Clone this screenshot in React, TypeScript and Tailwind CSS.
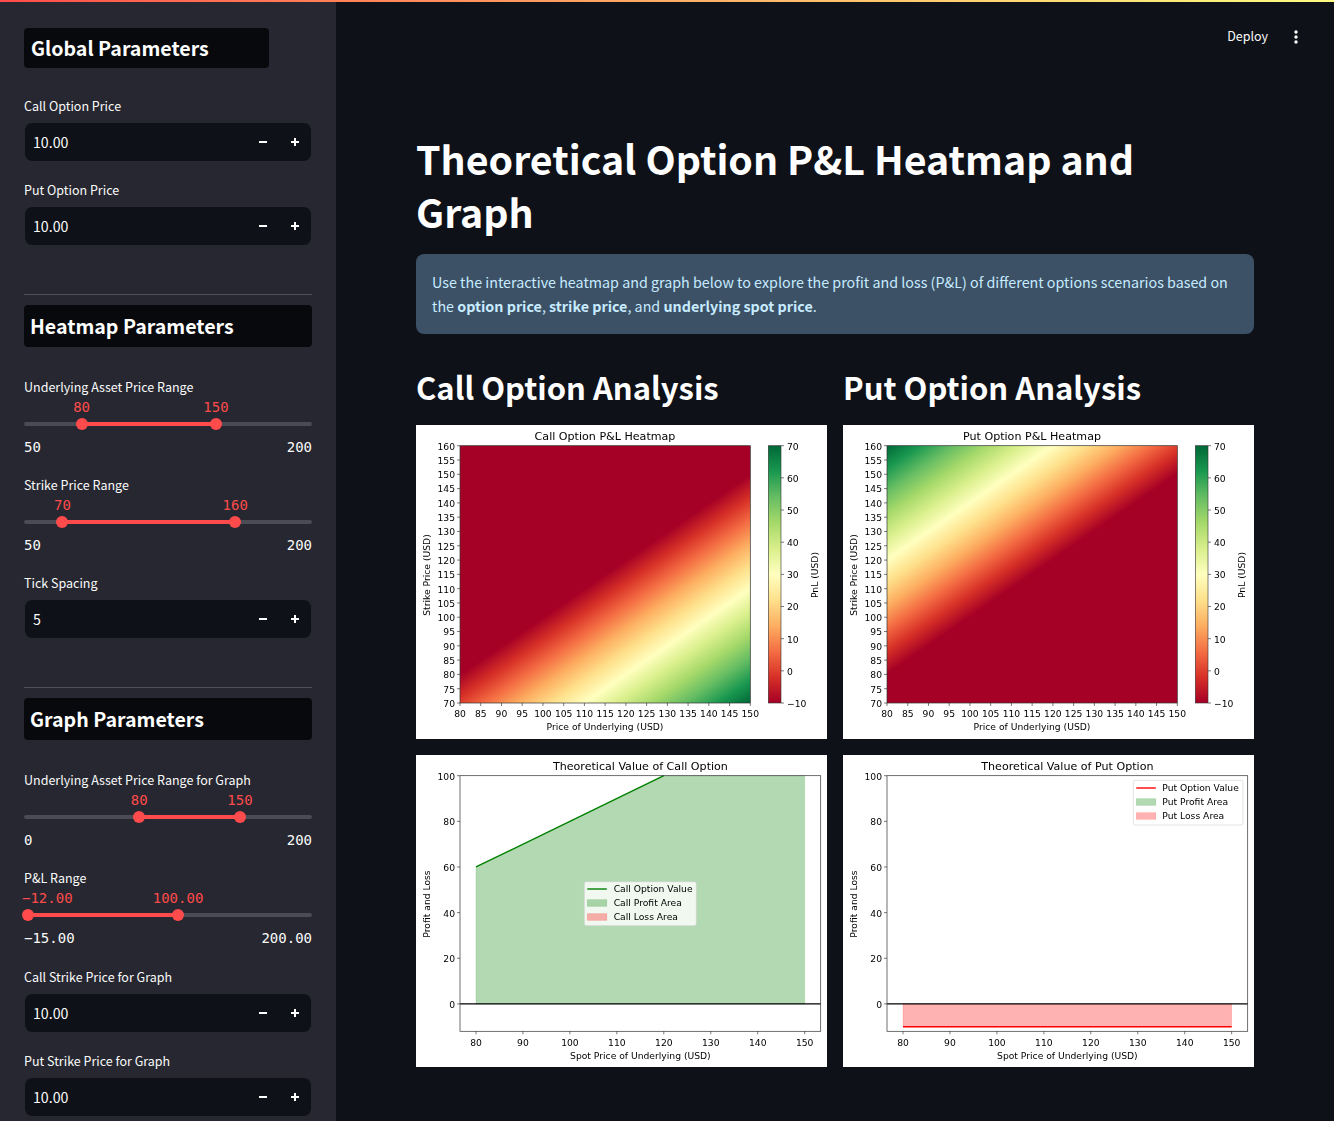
const RDYLGN = ['#a50026', '#d73027', '#f46d43', '#fdae61', '#fee08b', '#ffffbf', '#d9ef8b', '#a6d96a', '#66bd63', '#1a9850', '#006837']

const PLOT = { left: 44, right: 334.3, top: 20.7, bottom: 278 }
const LINE_PLOT = { left: 44, right: 404.7, top: 20.7, bottom: 276.3 }

function range(from: number, to: number, step: number) {
  const out: number[] = []
  for (let v = from; v <= to; v += step) out.push(v)
  return out
}

function ColorStops() {
  return (
    <>
      {RDYLGN.map((color, i) => (
        <stop key={color} offset={i / 10} stopColor={color} />
      ))}
    </>
  )
}

function Heatmap({ kind }: { kind: 'Call' | 'Put' }) {
  const sx = (s: number) => PLOT.left + ((s - 80) * (PLOT.right - PLOT.left)) / 70
  const ky = (k: number) => PLOT.bottom - ((k - 70) * (PLOT.bottom - PLOT.top)) / 90
  const cbarTop = PLOT.top
  const cbarBottom = PLOT.bottom
  const cbarY = (v: number) => cbarBottom - ((v + 10) * (cbarBottom - cbarTop)) / 80

  // pnl only depends on S - K, so the whole field is one linear gradient
  const sign = kind === 'Call' ? 1 : -1
  const gx = (sign * 70) / (PLOT.right - PLOT.left)
  const gy = (sign * 90) / (PLOT.bottom - PLOT.top)
  const norm = gx * gx + gy * gy
  const x1 = sx(100)
  const y1 = ky(100)
  const x2 = x1 + (gx * 80) / norm
  const y2 = y1 + (gy * 80) / norm

  return (
    <svg width="411" height="314" className="block bg-white font-['DejaVu_Sans'] blur-[0.45px]">
      <defs>
        <linearGradient id={`field-${kind}`} gradientUnits="userSpaceOnUse" x1={x1} y1={y1} x2={x2} y2={y2}>
          <ColorStops />
        </linearGradient>
        <linearGradient id={`cbar-${kind}`} x1="0" y1="1" x2="0" y2="0">
          <ColorStops />
        </linearGradient>
      </defs>
      <text x="189" y="15.2" fontSize="11.1" textAnchor="middle" fill="#000">
        {kind} Option P&amp;L Heatmap
      </text>
      <rect x={PLOT.left} y={PLOT.top} width={PLOT.right - PLOT.left} height={PLOT.bottom - PLOT.top} fill={`url(#field-${kind})`} stroke="#333" strokeWidth="0.7" />
      {range(80, 150, 5).map(s => (
        <g key={s}>
          <line x1={sx(s)} x2={sx(s)} y1={PLOT.bottom} y2={PLOT.bottom + 3} stroke="#222" strokeWidth="0.6" />
          <text x={sx(s)} y="292.2" fontSize="9.2" textAnchor="middle" fill="#000">{s}</text>
        </g>
      ))}
      {range(70, 160, 5).map(k => (
        <g key={k}>
          <line x1={PLOT.left - 3} x2={PLOT.left} y1={ky(k)} y2={ky(k)} stroke="#222" strokeWidth="0.6" />
          <text x={PLOT.left - 5} y={ky(k) + 3.9} fontSize="9.2" textAnchor="end" fill="#000">{k}</text>
        </g>
      ))}
      <text x="189" y="305" fontSize="9.2" textAnchor="middle" fill="#000">Price of Underlying (USD)</text>
      <text transform="translate(14 150) rotate(-90)" fontSize="9.2" textAnchor="middle" fill="#000">Strike Price (USD)</text>
      <rect x="352.3" y={cbarTop} width="12.7" height={cbarBottom - cbarTop} fill={`url(#cbar-${kind})`} stroke="#333" strokeWidth="0.6" />
      {range(-10, 70, 10).map(v => (
        <g key={v}>
          <line x1="365" x2="368" y1={cbarY(v)} y2={cbarY(v)} stroke="#222" strokeWidth="0.6" />
          <text x="371" y={cbarY(v) + 3.9} fontSize="9.2" fill="#000">{v < 0 ? `\u2212${-v}` : v}</text>
        </g>
      ))}
      <text transform="translate(402 150) rotate(-90)" fontSize="9.2" textAnchor="middle" fill="#000">PnL (USD)</text>
    </svg>
  )
}

function ValueChart({ kind }: { kind: 'Call' | 'Put' }) {
  const isCall = kind === 'Call'
  const sx = (s: number) => 60 + ((s - 80) * 328.67) / 70
  const py = (v: number) => LINE_PLOT.top + ((100 - v) * (LINE_PLOT.bottom - LINE_PLOT.top)) / 112
  const lg = isCall
    ? { x: 168.3, y: 126.7, w: 112, h: 44, rows: [134, 148, 162], hx: 171.3, tx: 197.7 }
    : { x: 290.3, y: 25.3, w: 109.7, h: 44.7, rows: [33, 47, 61], hx: 293.3, tx: 319.3 }

  return (
    <svg width="411" height="312" className="block bg-white font-['DejaVu_Sans'] blur-[0.45px]">
      <text x="224.4" y="15.2" fontSize="11.1" textAnchor="middle" fill="#000">
        Theoretical Value of {kind} Option
      </text>
      {isCall ? (
        <>
          <polygon
            points={`${sx(80)},${py(0)} ${sx(80)},${py(60)} ${sx(120)},${py(100)} ${sx(150)},${py(100)} ${sx(150)},${py(0)}`}
            fill="#008000"
            fillOpacity="0.3"
            stroke="#008000"
            strokeOpacity="0.2"
            strokeWidth="0.7"
          />
          <line x1={sx(80)} y1={py(60)} x2={sx(120)} y2={py(100)} stroke="#008000" strokeWidth="1.4" />
        </>
      ) : (
        <>
          <rect x={sx(80)} y={py(0)} width={sx(150) - sx(80)} height={py(-10) - py(0)} fill="#ff0000" fillOpacity="0.3" stroke="#ff0000" strokeOpacity="0.2" strokeWidth="0.7" />
          <line x1={sx(80)} y1={py(-10)} x2={sx(150)} y2={py(-10)} stroke="#ff0000" strokeWidth="1.6" />
        </>
      )}
      <line x1={LINE_PLOT.left} x2={LINE_PLOT.right} y1={py(0)} y2={py(0)} stroke="#000" strokeWidth="1.1" />
      <rect x={LINE_PLOT.left} y={LINE_PLOT.top} width={LINE_PLOT.right - LINE_PLOT.left} height={LINE_PLOT.bottom - LINE_PLOT.top} fill="none" stroke="#333" strokeWidth="0.7" />
      {range(80, 150, 10).map(s => (
        <g key={s}>
          <line x1={sx(s)} x2={sx(s)} y1={LINE_PLOT.bottom} y2={LINE_PLOT.bottom + 3} stroke="#222" strokeWidth="0.6" />
          <text x={sx(s)} y="290.5" fontSize="9.2" textAnchor="middle" fill="#000">{s}</text>
        </g>
      ))}
      {range(0, 100, 20).map(v => (
        <g key={v}>
          <line x1={LINE_PLOT.left - 3} x2={LINE_PLOT.left} y1={py(v)} y2={py(v)} stroke="#222" strokeWidth="0.6" />
          <text x={LINE_PLOT.left - 5} y={py(v) + 3.9} fontSize="9.2" textAnchor="end" fill="#000">{v}</text>
        </g>
      ))}
      <text x="224.4" y="303.5" fontSize="9.2" textAnchor="middle" fill="#000">Spot Price of Underlying (USD)</text>
      <text transform="translate(14 149) rotate(-90)" fontSize="9.2" textAnchor="middle" fill="#000">Profit and Loss</text>

      <rect x={lg.x} y={lg.y} width={lg.w} height={lg.h} rx="2" fill="#fff" fillOpacity="0.8" stroke="#ccc" strokeOpacity="0.8" strokeWidth="0.7" />
      <line x1={lg.hx} x2={lg.hx + 19.5} y1={lg.rows[0]} y2={lg.rows[0]} stroke={isCall ? '#008000' : '#ff0000'} strokeWidth="1.4" />
      <rect x={lg.hx} y={lg.rows[1] - 3.3} width="19.5" height="6.6" fill="#008000" fillOpacity="0.3" stroke="#008000" strokeOpacity="0.2" strokeWidth="0.7" />
      <rect x={lg.hx} y={lg.rows[2] - 3.3} width="19.5" height="6.6" fill="#ff0000" fillOpacity="0.3" stroke="#ff0000" strokeOpacity="0.2" strokeWidth="0.7" />
      <text x={lg.tx} y={lg.rows[0] + 3.3} fontSize="9.2" fill="#000">{kind} Option Value</text>
      <text x={lg.tx} y={lg.rows[1] + 3.3} fontSize="9.2" fill="#000">{kind} Profit Area</text>
      <text x={lg.tx} y={lg.rows[2] + 3.3} fontSize="9.2" fill="#000">{kind} Loss Area</text>
    </svg>
  )
}

function SectionHeading({ title, className }: { title: string; className: string }) {
  return (
    <div className={`flex items-center rounded bg-[#08090c] text-[19.6px] font-bold leading-none text-white ${className}`}>
      {title}
    </div>
  )
}

function NumberField({ label, value, className = '' }: { label: string; value: string; className?: string }) {
  return (
    <div className={className}>
      <div className="h-[21px] text-[12.5px] leading-[19px] text-[#fafafa]">{label}</div>
      <div className="mt-1.5 flex h-[38px] items-center rounded-lg border-x border-[#262730] bg-[#0e1117] pl-2 text-[14.2px] text-[#fafafa]">
        <span className="flex-1 pt-0.5">{value}</span>
        <svg width="8" height="8" viewBox="0 0 8 8" className="mr-6 text-white">
          <rect x="0" y="3" width="8" height="2" fill="currentColor" />
        </svg>
        <svg width="8" height="8" viewBox="0 0 8 8" className="mr-3 text-white">
          <rect x="0" y="3" width="8" height="2" fill="currentColor" />
          <rect x="3" y="0" width="2" height="8" fill="currentColor" />
        </svg>
      </div>
    </div>
  )
}

type SliderProps = {
  label: string
  min: number
  max: number
  low: number
  high: number
  digits?: number
}

function RangeSlider({ label, min, max, low, high, digits = 0 }: SliderProps) {
  const pct = (v: number) => ((v - min) / (max - min)) * 100
  const fmt = (v: number) => v.toFixed(digits).replace('-', '\u2212')
  return (
    <div className="h-[98px]">
      <div className="h-[21px] text-[12.5px] leading-[19px] text-[#fafafa]">{label}</div>
      <div className="relative mt-[23.5px] h-1 rounded-full bg-[#4a4b54] font-['DejaVu_Sans_Mono'] text-sm">
        <div
          className="absolute h-1 bg-[#ff4b4b]"
          style={{ left: `${pct(low)}%`, width: `${pct(high) - pct(low)}%` }}
        />
        {[low, high].map(v => (
          <div key={v} className="absolute top-[-4px] size-3 -translate-x-1/2 rounded-full bg-[#ff4b4b]" style={{ left: `${pct(v)}%` }}>
            <div
              className="absolute top-[-21px] text-center leading-[21px] whitespace-nowrap text-[#ff4b4b]"
              style={{ left: 6, transform: pct(v) < 5 ? 'translateX(-6px)' : 'translateX(-50%)' }}
            >
              {fmt(v)}
            </div>
          </div>
        ))}
      </div>
      <div className="mt-[11.5px] flex justify-between font-['DejaVu_Sans_Mono'] text-sm leading-[21px] text-[#fafafa]">
        <span>{fmt(min)}</span>
        <span>{fmt(max)}</span>
      </div>
    </div>
  )
}

function Divider() {
  return <div className="mt-[49px] h-px bg-[#4f5058]" />
}

function App() {
  return (
    <div className="relative flex h-[1121px] overflow-hidden bg-[#0e1117] font-['Noto_Sans_CJK_SC','Source_Sans_Pro',sans-serif]">
      <div className="absolute inset-x-0 top-0 z-10 h-0.5 bg-gradient-to-r from-[#ff4b4b] to-[#fffd80]" />

      <aside className="w-[336px] shrink-0 bg-[#262730] px-6 pt-7">
        <SectionHeading title="Global Parameters" className="h-10 w-[245px] pl-[7px]" />
        <NumberField label="Call Option Price" value="10.00" className="mt-7" />
        <NumberField label="Put Option Price" value="10.00" className="mt-[19px]" />
        <Divider />
        <SectionHeading title="Heatmap Parameters" className="mt-2.5 h-[42px] pl-1.5" />
        <div className="mt-[30px]">
          <RangeSlider label="Underlying Asset Price Range" min={50} max={200} low={80} high={150} />
          <RangeSlider label="Strike Price Range" min={50} max={200} low={70} high={160} />
        </div>
        <NumberField label="Tick Spacing" value="5" />
        <Divider />
        <SectionHeading title="Graph Parameters" className="mt-2.5 h-[42px] pl-1.5" />
        <div className="mt-[30px]">
          <RangeSlider label="Underlying Asset Price Range for Graph" min={0} max={200} low={80} high={150} />
          <RangeSlider label="P&L Range" min={-15} max={200} low={-12} high={100} digits={2} />
        </div>
        <NumberField label="Call Strike Price for Graph" value="10.00" className="mt-px" />
        <NumberField label="Put Strike Price for Graph" value="10.00" className="mt-[19px]" />
      </aside>

      <main className="relative flex-1 px-20 pt-[131px]">
        <div className="absolute top-[26px] right-[36px] flex items-center gap-[26px] text-[12.5px] text-[#fafafa]">
          <span className="h-[21px] leading-[19px]">Deploy</span>
          <svg width="4" height="16" viewBox="0 0 4 16" className="text-white">
            <circle cx="2" cy="3" r="1.7" fill="currentColor" />
            <circle cx="2" cy="8" r="1.7" fill="currentColor" />
            <circle cx="2" cy="13" r="1.7" fill="currentColor" />
          </svg>
        </div>

        <h1 className="text-[39.3px] leading-[53px] font-bold text-white">Theoretical Option P&amp;L Heatmap and Graph</h1>

        <div className="mt-[17px] h-20 rounded-lg bg-[#3c5166] px-4 py-4 text-[14.3px] leading-6 text-[#c7ebff]">
          Use the interactive heatmap and graph below to explore the profit and loss (P&amp;L) of different options scenarios based on the <b>option price</b>, <b>strike price</b>, and <b>underlying spot price</b>.
        </div>

        <div className="mt-8 grid grid-cols-2 gap-x-4">
          <h2 className="h-[59px] text-[31px] leading-[41px] font-semibold text-white">Call Option Analysis</h2>
          <h2 className="h-[59px] text-[31px] leading-[41px] font-semibold text-white">Put Option Analysis</h2>
          <Heatmap kind="Call" />
          <Heatmap kind="Put" />
          <div className="mt-4">
            <ValueChart kind="Call" />
          </div>
          <div className="mt-4">
            <ValueChart kind="Put" />
          </div>
        </div>
      </main>
    </div>
  )
}

export default App
